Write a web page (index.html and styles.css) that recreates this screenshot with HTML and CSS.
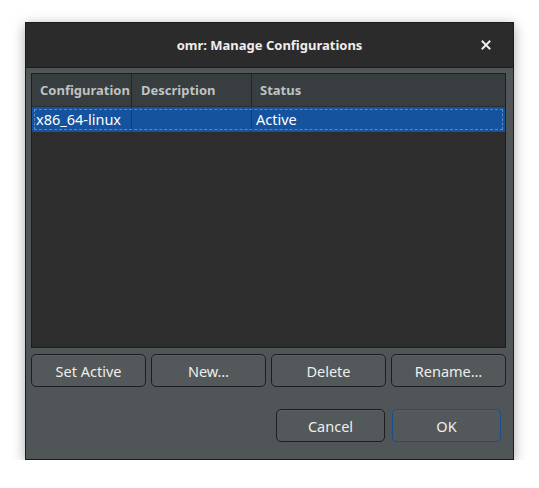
FILE: index.html
```html
<!DOCTYPE html>
<html>
<head>
<meta charset="utf-8">
<link rel="stylesheet" href="styles.css">
</head>
<body>
<div class="dialog">
  <div class="titlebar">
    <span class="title">omr: Manage Configurations</span>
    <svg class="close" width="10" height="10" viewBox="0 0 10 10"><path d="M1.5 1.5 L8.5 8.5 M8.5 1.5 L1.5 8.5" stroke="#eeeeec" stroke-width="2" stroke-linecap="square"/></svg>
  </div>
  <div class="content">
    <div class="tree">
      <div class="row header">
        <div class="cell c1">Configuration</div>
        <div class="cell c2">Description</div>
        <div class="cell c3">Status</div>
      </div>
      <div class="row selected">
        <div class="cell c1">x86_64-linux</div>
        <div class="cell c2"></div>
        <div class="cell c3">Active</div>
      </div>
    </div>
    <div class="actions">
      <button class="btn">Set Active</button>
      <button class="btn">New…</button>
      <button class="btn">Delete</button>
      <button class="btn">Rename…</button>
    </div>
    <div class="footer">
      <button class="btn wide">Cancel</button>
      <button class="btn wide default">OK</button>
    </div>
  </div>
</div>
</body>
</html>
```

FILE: styles.css
```css
html, body {
  margin: 0;
  padding: 0;
  background: #ffffff;
}
body {
  font-family: "Noto Sans", "Open Sans", sans-serif;
  font-size: 14.5px;
  color: #eeeeec;
}
.dialog {
  margin: 22px 0 0 25px;
  width: 489px;
  height: 438px;
  box-sizing: border-box;
  border: 1px solid #1b1d1d;
  background: #505557;
  box-shadow: 0 3px 12px rgba(0, 0, 0, 0.35);
  display: flex;
  flex-direction: column;
}
.titlebar {
  position: relative;
  height: 44px;
  flex: none;
  background: #2b2b2b;
  border-bottom: 1px solid #1b1b1b;
  display: flex;
  align-items: center;
  justify-content: center;
}
.title {
  font-weight: bold;
  font-size: 13px;
  color: #eeeeec;
}
.close {
  position: absolute;
  right: 22px;
  top: 17px;
}
.content {
  flex: 1;
  display: flex;
  flex-direction: column;
  padding: 5px 7px 0 5px;
}
.tree {
  height: 275px;
  box-sizing: border-box;
  border: 1px solid #1c1f20;
  background: #2d2d2d;
}
.row {
  display: flex;
}
.cell {
  box-sizing: border-box;
  white-space: nowrap;
  overflow: hidden;
}
.c1 { width: 100px; border-right: 1px solid #24282a; }
.c2 { width: 120px; border-right: 1px solid #24282a; }
.c3 { flex: 1; }
.header {
  height: 33px;
  background: #383d3f;
  border-bottom: 1px solid #2a2e30;
  box-sizing: border-box;
}
.header .cell {
  line-height: 32px;
  font-weight: bold;
  font-size: 13px;
  color: #bfc2c2;
}
.header .c1 { padding-left: 8px; }
.header .c2 { padding-left: 9px; }
.header .c3 { padding-left: 8px; }
.selected {
  height: 25px;
  background: #15539e;
  outline: 1px dashed rgba(180, 200, 230, 0.45);
  outline-offset: -3px;
}
.selected .cell {
  line-height: 25px;
  color: #ffffff;
  border-right-color: #0f3c73;
}
.selected .c1 { padding-left: 4px; }
.selected .c3 { padding-left: 4px; }
.actions {
  display: flex;
  gap: 5px;
  margin-top: 6px;
}
.btn {
  font-family: inherit;
  font-size: 14.5px;
  color: #eeeeec;
  background: #53585b;
  border: 1px solid #1c1f1f;
  border-radius: 5px;
  height: 33px;
  width: 115px;
  padding: 0;
  box-shadow: inset 0 1px rgba(255, 255, 255, 0.04);
}
.footer {
  display: flex;
  justify-content: flex-end;
  gap: 7px;
  margin-top: 22px;
  padding-right: 5px;
}
.btn.wide {
  width: 109px;
}
.btn.default {
  border-color: #1b4e8a;
}
```
